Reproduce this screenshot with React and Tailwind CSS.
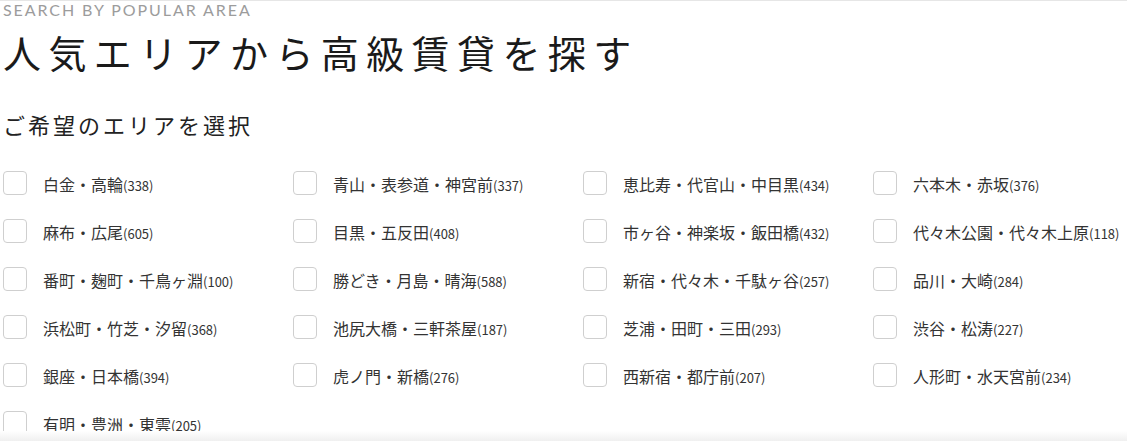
import React from 'react';

const areas = [
  ['白金・高輪', 338],
  ['青山・表参道・神宮前', 337],
  ['恵比寿・代官山・中目黒', 434],
  ['六本木・赤坂', 376],
  ['麻布・広尾', 605],
  ['目黒・五反田', 408],
  ['市ヶ谷・神楽坂・飯田橋', 432],
  ['代々木公園・代々木上原', 118],
  ['番町・麹町・千鳥ヶ淵', 100],
  ['勝どき・月島・晴海', 588],
  ['新宿・代々木・千駄ヶ谷', 257],
  ['品川・大崎', 284],
  ['浜松町・竹芝・汐留', 368],
  ['池尻大橋・三軒茶屋', 187],
  ['芝浦・田町・三田', 293],
  ['渋谷・松涛', 227],
  ['銀座・日本橋', 394],
  ['虎ノ門・新橋', 276],
  ['西新宿・都庁前', 207],
  ['人形町・水天宮前', 234],
  ['有明・豊洲・東雲', 205],
];

const jp = { fontFamily: '"Noto Sans CJK JP", "Noto Sans", sans-serif' };

const AreaCheck = ({ name, count }) => (
  <label className="flex items-center h-6 cursor-pointer">
    <span className="w-6 h-6 shrink-0 rounded-[4px] border border-[#cfcfcf] bg-white" />
    <span className="ml-4 pt-[1px] text-[16px] text-[#333] leading-none whitespace-nowrap">
      {name}
      <span className="text-[13px]">({count})</span>
    </span>
  </label>
);

const App = () => {
  return (
    <div className="w-[1127px] h-[441px] overflow-hidden bg-white border-t border-[#e6e6e6] relative" style={jp}>
      <div className="pl-[3px]">
        {/* Heading */}
        <p
          className="text-[16px] leading-[18px] tracking-[0.12em] text-[#9c9c9c] uppercase font-normal"
          style={{ fontFamily: 'Lato, "Open Sans", sans-serif' }}
        >
          Search by popular area
        </p>
        <h1 className="mt-[11px] text-[38px] leading-[44px] tracking-[7.4px] text-[#1a1a1a] font-normal">
          人気エリアから高級賃貸を探す
        </h1>

        <h2 className="mt-[36px] text-[22px] leading-[28px] tracking-[3px] text-[#222] font-normal">
          ご希望のエリアを選択
        </h2>

        {/* Area grid */}
        <div className="mt-[33px] grid grid-cols-[290px_290px_290px_290px] gap-y-6">
          {areas.map(([name, count]) => (
            <AreaCheck key={name} name={name} count={count} />
          ))}
        </div>
      </div>

      {/* bottom fade */}
      <div className="absolute left-0 right-0 bottom-0 h-[10px] bg-gradient-to-b from-white to-[#f0f0f0]" />
    </div>
  );
};

export default App;
